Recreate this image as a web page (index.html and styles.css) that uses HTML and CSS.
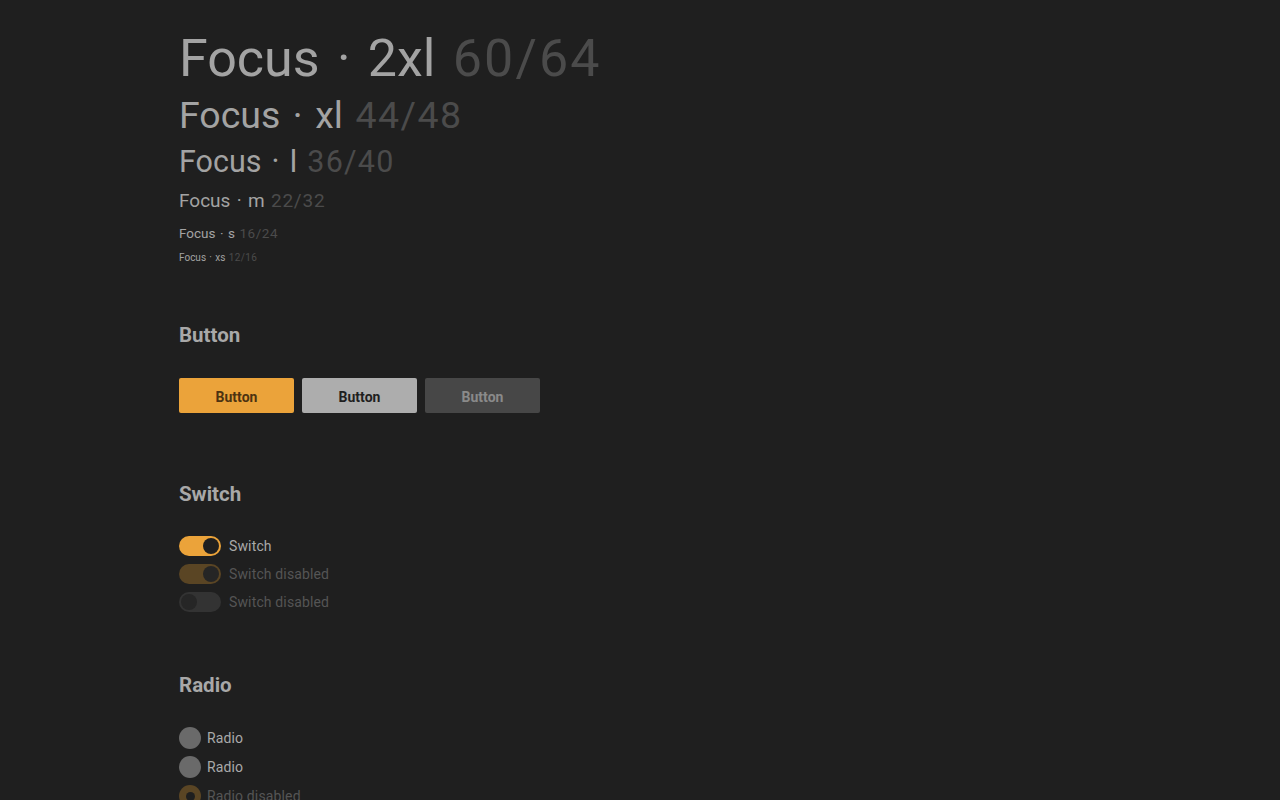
FILE: index.html
```html
<!DOCTYPE html>
<html lang="en">
<head>
<meta charset="utf-8">
<title>Focus</title>
<link rel="stylesheet" href="styles.css">
</head>
<body>
<main class="page">
  <section class="type">
    <div class="t t-2xl">Focus · 2xl <span class="num">60/64</span></div>
    <div class="t t-xl">Focus · xl <span class="num">44/48</span></div>
    <div class="t t-l">Focus · l <span class="num">36/40</span></div>
    <div class="t t-m">Focus · m <span class="num">22/32</span></div>
    <div class="t t-s">Focus · s <span class="num">16/24</span></div>
    <div class="t t-xs">Focus · xs <span class="num">12/16</span></div>
  </section>

  <section class="block block-buttons">
    <h2 class="heading">Button</h2>
    <div class="buttons">
      <button class="btn btn-primary">Button</button>
      <button class="btn btn-secondary">Button</button>
      <button class="btn btn-disabled">Button</button>
    </div>
  </section>

  <section class="block block-switch">
    <h2 class="heading">Switch</h2>
    <div class="list list-switch">
      <label class="row">
        <span class="switch on"><span class="knob"></span></span>
        <span class="label">Switch</span>
      </label>
      <label class="row">
        <span class="switch on disabled"><span class="knob"></span></span>
        <span class="label label-disabled">Switch disabled</span>
      </label>
      <label class="row">
        <span class="switch off disabled"><span class="knob"></span></span>
        <span class="label label-disabled">Switch disabled</span>
      </label>
    </div>
  </section>

  <section class="block block-radio">
    <h2 class="heading">Radio</h2>
    <div class="list list-radio">
      <label class="row row-radio">
        <span class="radio"></span>
        <span class="label">Radio</span>
      </label>
      <label class="row row-radio">
        <span class="radio"></span>
        <span class="label">Radio</span>
      </label>
      <label class="row row-radio">
        <span class="radio checked disabled"><span class="dot"></span></span>
        <span class="label label-disabled">Radio disabled</span>
      </label>
    </div>
  </section>
</main>
</body>
</html>
```

FILE: styles.css
```css
html, body {
  margin: 0;
  padding: 0;
  background: #1f1f1f;
  height: 100%;
  overflow: hidden;
}

body {
  font-family: Roboto, "Noto Sans", "Liberation Sans", sans-serif;
  color: #a6a6a6;
}

.page {
  padding: 27px 0 0 179px;
}

.type {
  display: flex;
  flex-direction: column;
}

.t {
  color: #a3a3a3;
  white-space: nowrap;
  word-spacing: 0.085em;
}

.num {
  color: #4b4b4b;
  letter-spacing: 0.04em;
}

.t-2xl { font-size: 52px; line-height: 64px; }
.t-xl  { font-size: 37.5px; line-height: 48px; }
.t-l   { font-size: 30.5px; line-height: 40px; margin-top: 3px; }
.t-m   { font-size: 19px; line-height: 32px; margin-top: 3px; }
.t-s   { font-size: 13.5px; line-height: 24px; margin-top: 4px; }
.t-xs  { font-size: 10px; line-height: 16px; margin-top: 5px; }

.block-buttons { margin-top: 55px; }
.block-switch  { margin-top: 67px; }
.block-radio   { margin-top: 59px; }

.heading {
  margin: 0 0 28px;
  font-size: 20.5px;
  line-height: 28px;
  font-weight: 700;
  color: #a8a8a8;
}

.block-buttons .heading { margin-bottom: 29px; }
.block-switch .heading { margin-bottom: 28px; }

.buttons {
  display: flex;
  gap: 8px;
}

.btn {
  width: 115px;
  height: 35px;
  padding: 3px 0 0;
  border: 0;
  border-radius: 2px;
  font-family: inherit;
  font-size: 14px;
  font-weight: 700;
  line-height: 32px;
  text-align: center;
}

.btn-primary   { background: #eba33a; color: #4d3311; }
.btn-secondary { background: #adadad; color: #1f1f1f; }
.btn-disabled  { background: #474747; color: #8a8a8a; }

.list {
  display: flex;
  flex-direction: column;
}

.list-switch { gap: 8px; }
.list-radio  { gap: 7px; }

.row {
  display: flex;
  align-items: center;
  gap: 8px;
  font-size: 14px;
  line-height: 20px;
}

.row-radio {
  gap: 6px;
  line-height: 22px;
}

.label { color: #a9a9a9; letter-spacing: 0.01em; }
.label-disabled { color: #555555; }

.switch {
  position: relative;
  width: 42px;
  height: 20px;
  border-radius: 10px;
  flex: none;
}

.switch.on { background: #eba33a; }
.switch.on.disabled { background: #5a4524; }
.switch.off.disabled { background: #333333; }

.knob {
  position: absolute;
  top: 2px;
  width: 16px;
  height: 16px;
  border-radius: 50%;
  background: #1f1f1f;
}

.switch.on .knob { right: 2px; }
.switch.on.disabled .knob { background: #252525; }
.switch.off .knob { left: 2px; background: #262626; }

.radio {
  width: 22px;
  height: 22px;
  border-radius: 50%;
  background: #6a6a6a;
  flex: none;
  display: flex;
  align-items: center;
  justify-content: center;
}

.radio.checked.disabled { background: #5a4524; }

.dot {
  width: 9px;
  height: 9px;
  border-radius: 50%;
  background: #1f1f1f;
}
```
